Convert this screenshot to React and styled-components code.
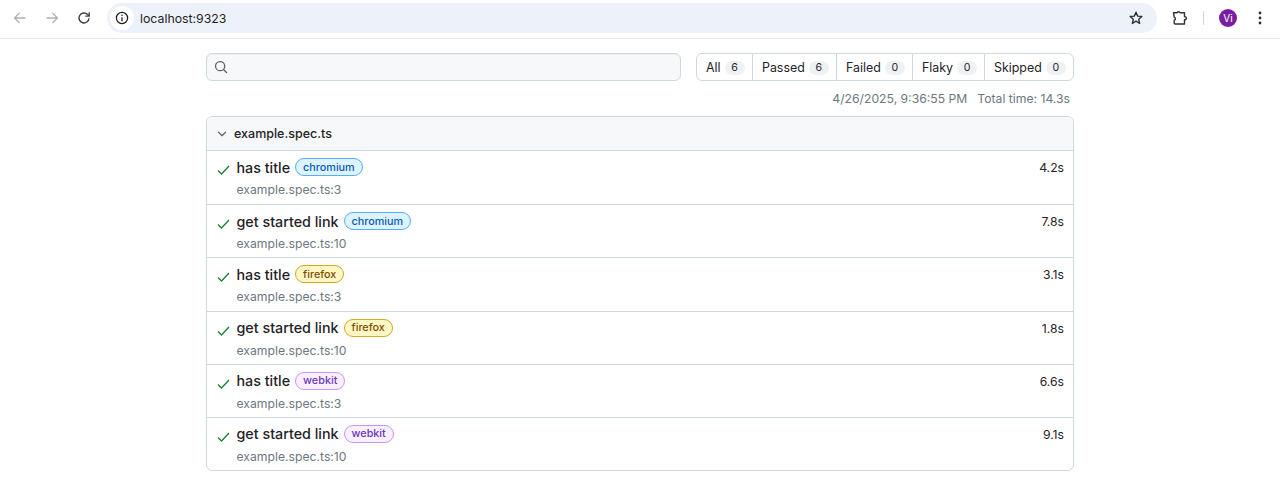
import React from "react";
import styled, { createGlobalStyle } from "styled-components";

const Global = createGlobalStyle`
  html, body { margin: 0; padding: 0; background: #fff; }
  body { font-family: Inter, "Liberation Sans", sans-serif; color: #1f2328; overflow: hidden; }
`;
const Page = styled.div`width: 1280px; height: 478px; overflow: hidden;`;
const Toolbar = styled.header`
  height: 39px; box-sizing: border-box; border-bottom: 1px solid #e6e6e6;
  display: flex; align-items: center; padding: 1px 12px 3px 0;
`;
const NavIcons = styled.div`
  display: flex; align-items: center; gap: 16px; padding-left: 12px; width: 107px; box-sizing: border-box; flex: none;
`;
const IconSlot = styled.span`
  display: inline-flex; width: 16px; height: 16px; align-items: center; justify-content: center; flex: none;
`;
const UrlBar = styled.div`
  width: 1050px; height: 30px; flex: none; border-radius: 15px; background: #edf2fa;
  display: flex; align-items: center; padding: 0 13px 0 3px; box-sizing: border-box;
`;
const SiteInfo = styled.span`
  width: 24px; height: 24px; border-radius: 50%; background: #fff; display: inline-flex;
  align-items: center; justify-content: center; flex: none;
`;
const UrlText = styled.span`font-size: 12.3px; color: #1f1f1f; margin-left: 6px; flex: 1;`;
const RightIcons = styled.div`display: flex; align-items: center; flex: none; margin-left: 15px;`;
const Divider = styled.span`width: 1px; height: 14px; background: #c7d7f2; margin: 0 15px 0 15px;`;
const Avatar = styled.span`
  width: 18px; height: 18px; border-radius: 50%; background: #7a1ea1; color: #fff; font-size: 10px;
  display: inline-flex; align-items: center; justify-content: center; margin-right: 15px;
`;
const Main = styled.main`width: 868px; margin: 14px 0 0 206px;`;
const Controls = styled.div`display: flex; justify-content: space-between; height: 28px;`;
const Search = styled.div`
  width: 475px; box-sizing: border-box; height: 28px; border: 1px solid #d1d9e0; border-radius: 6px;
  background: #f6f8fa; box-shadow: inset 0 1px 0 rgba(31,35,40,.04);
  display: flex; align-items: center; padding-left: 7px; color: #59636e;
`;
const Filters = styled.nav`
  width: 378px; box-sizing: border-box; height: 28px; border: 1px solid #d1d9e0; border-radius: 6px; display: flex;
`;
const Filter = styled.div`
  flex: none; width: ${p => p.$w}px; box-sizing: border-box; display: flex; align-items: center; padding: 1px 0 0 9px;
  font-size: 12.4px; color: #1f2328; white-space: nowrap;
  & + & { border-left: 1px solid #d1d9e0; }
`;
const Count = styled.span`
  display: inline-block; min-width: 20px; height: 14px; line-height: 14px; border-radius: 7px; background: #eff2f5;
  text-align: center; font-size: 10.6px; color: #1f2328; margin-left: 4px;
`;
const Meta = styled.div`
  display: flex; justify-content: flex-end; gap: 10px; font-size: 12.2px; color: #6e7781; height: 16px; line-height: 16px;
  margin: 10px 0 9px; padding-right: 4px;
`;
const Card = styled.section`
  border: 1px solid #d1d9e0; border-radius: 6px; overflow: hidden; box-sizing: border-box; height: 355px;
`;
const CardHeader = styled.div`
  height: 33px; background: #f6f8fa; border-bottom: 1px solid #d1d9e0; box-sizing: content-box;
  display: flex; align-items: center; padding-left: 7px; gap: 4px;
  font-size: 12.5px; font-weight: 500; color: #1f2328;
`;
const Row = styled.div`
  height: 53.2px; box-sizing: border-box; display: flex; padding: 7px 9px 0 10px;
  & + & { border-top: 1px solid #d1d9e0; }
`;
const Status = styled.span`flex: none; width: 19.5px; height: 18px; padding-top: 3px; box-sizing: border-box;`;
const RowBody = styled.div`flex: 1; min-width: 0;`;
const TitleLine = styled.div`display: flex; align-items: center; height: 18px;`;
const Title = styled.span`font-size: 14.3px; font-weight: 500; color: #1f2328;`;
const Tag = styled.span`
  display: inline-flex; align-items: center; height: 18px; box-sizing: border-box; margin-left: 5px;
  padding: 0 7px; border-radius: 9px; font-size: 10.8px; font-weight: 500;
  border: 1px solid ${p => p.$tone.border}; background: ${p => p.$tone.bg}; color: ${p => p.$tone.fg};
`;
const Location = styled.div`font-size: 12.2px; color: #6e7781; margin-top: 6px; line-height: 15px;`;
const Duration = styled.span`flex: none; font-size: 12.2px; color: #1f2328; line-height: 18px; margin-top: 1px;`;

const tones = {
  chromium: { border: "#54aeff", bg: "#ddf4ff", fg: "#0a5ab8" },
  firefox: { border: "#d4a72c", bg: "#fff8c5", fg: "#7d4e00" },
  webkit: { border: "#c297ff", bg: "#fbefff", fg: "#6639ba" },
};
const rows = [
  ["has title", "chromium", "example.spec.ts:3", "4.2s"],
  ["get started link", "chromium", "example.spec.ts:10", "7.8s"],
  ["has title", "firefox", "example.spec.ts:3", "3.1s"],
  ["get started link", "firefox", "example.spec.ts:10", "1.8s"],
  ["has title", "webkit", "example.spec.ts:3", "6.6s"],
  ["get started link", "webkit", "example.spec.ts:10", "9.1s"],
];
const filters = [["All", 6, 55], ["Passed", 6, 84], ["Failed", 0, 76], ["Flaky", 0, 72], ["Skipped", 0, 89]];

const Arrow = ({ flip }) => (
  <svg width="16" height="16" viewBox="0 0 16 16" fill="none" stroke="#aeb0b3" strokeWidth="1.3" style={flip ? { transform: "scaleX(-1)" } : undefined}>
    <path d="M13.5 8H2.5M7.5 3 2.5 8l5 5" />
  </svg>
);
const Reload = () => (
  <svg width="16" height="16" viewBox="0 0 16 16" fill="none" stroke="#3c4043" strokeWidth="1.4">
    <path d="M13 8.2A5 5 0 1 1 11.4 4.3L13 5.8" />
    <path d="M13.2 2.2v3.9H9.3" strokeWidth="1.3" />
  </svg>
);
const Info = () => (
  <svg width="14" height="14" viewBox="0 0 14 14" fill="none" stroke="#1f1f1f" strokeWidth="1.3">
    <circle cx="7" cy="7" r="5.6" />
    <path d="M7 6.2v4" />
    <circle cx="7" cy="4.2" r=".8" fill="#1f1f1f" stroke="none" />
  </svg>
);
const Star = () => (
  <svg width="16" height="16" viewBox="0 0 16 16" fill="none" stroke="#303134" strokeWidth="1.4" strokeLinejoin="round">
    <path d="M8 2.2l1.7 3.9 4.2.4-3.2 2.8 1 4.1L8 11.2l-3.7 2.2 1-4.1L2.1 6.5l4.2-.4z" />
  </svg>
);
const Puzzle = () => (
  <svg width="16" height="16" viewBox="0 0 16 16" fill="none" stroke="#303134" strokeWidth="1.4" strokeLinejoin="round">
    <path d="M1.5 2.8h3.6a1.6 1.6 0 0 1 3 0h4.4v3.9a1.6 1.6 0 0 1 1.9 1.5 1.6 1.6 0 0 1-1.9 1.5v4.3H3l-.8-.8v-3a1.6 1.6 0 0 0 0-3.1z" />
  </svg>
);
const Kebab = () => (
  <svg width="16" height="16" viewBox="0 0 16 16" fill="#303134">
    <circle cx="8" cy="3" r="1.4" /><circle cx="8" cy="8" r="1.4" /><circle cx="8" cy="13" r="1.4" />
  </svg>
);
const SearchIcon = () => (
  <svg width="14" height="14" viewBox="0 0 16 16" fill="currentColor">
    <path d="M10.68 11.74a6 6 0 0 1-7.92-8.98 6 6 0 0 1 8.98 7.92l3.04 3.04a.75.75 0 1 1-1.06 1.06ZM11.5 7a4.5 4.5 0 1 0-9 0 4.5 4.5 0 0 0 9 0Z" />
  </svg>
);
const Chevron = () => (
  <svg width="16" height="16" viewBox="0 0 16 16" fill="#59636e">
    <path d="M12.78 5.22a.75.75 0 0 1 0 1.06l-4.25 4.25a.75.75 0 0 1-1.06 0L3.22 6.28a.75.75 0 0 1 1.06-1.06L8 8.94l3.72-3.72a.75.75 0 0 1 1.06 0Z" transform="translate(1.3 1.3) scale(.84)" />
  </svg>
);
const Check = () => (
  <svg width="14" height="14" viewBox="0 0 14 14" fill="none" stroke="#1a7f37" strokeWidth="1.3">
    <path d="M1 7.5 4.5 11 12 3" />
  </svg>
);

export default function App() {
  return (
    <Page>
      <Global />
      <Toolbar>
        <NavIcons>
          <IconSlot><Arrow /></IconSlot>
          <IconSlot><Arrow flip /></IconSlot>
          <IconSlot><Reload /></IconSlot>
        </NavIcons>
        <UrlBar>
          <SiteInfo><Info /></SiteInfo>
          <UrlText>localhost:9323</UrlText>
          <IconSlot><Star /></IconSlot>
        </UrlBar>
        <RightIcons>
          <IconSlot><Puzzle /></IconSlot>
          <Divider />
          <Avatar>Vi</Avatar>
          <IconSlot><Kebab /></IconSlot>
        </RightIcons>
      </Toolbar>
      <Main>
        <Controls>
          <Search><SearchIcon /></Search>
          <Filters>
            {filters.map(([name, n, w]) => (
              <Filter key={name} $w={w}>{name}<Count>{n}</Count></Filter>
            ))}
          </Filters>
        </Controls>
        <Meta><span>4/26/2025, 9:36:55 PM</span><span>Total time: 14.3s</span></Meta>
        <Card>
          <CardHeader><Chevron />example.spec.ts</CardHeader>
          {rows.map(([title, tag, loc, time], i) => (
            <Row key={i}>
              <Status><Check /></Status>
              <RowBody>
                <TitleLine><Title>{title}</Title><Tag $tone={tones[tag]}>{tag}</Tag></TitleLine>
                <Location>{loc}</Location>
              </RowBody>
              <Duration>{time}</Duration>
            </Row>
          ))}
        </Card>
      </Main>
    </Page>
  );
}
